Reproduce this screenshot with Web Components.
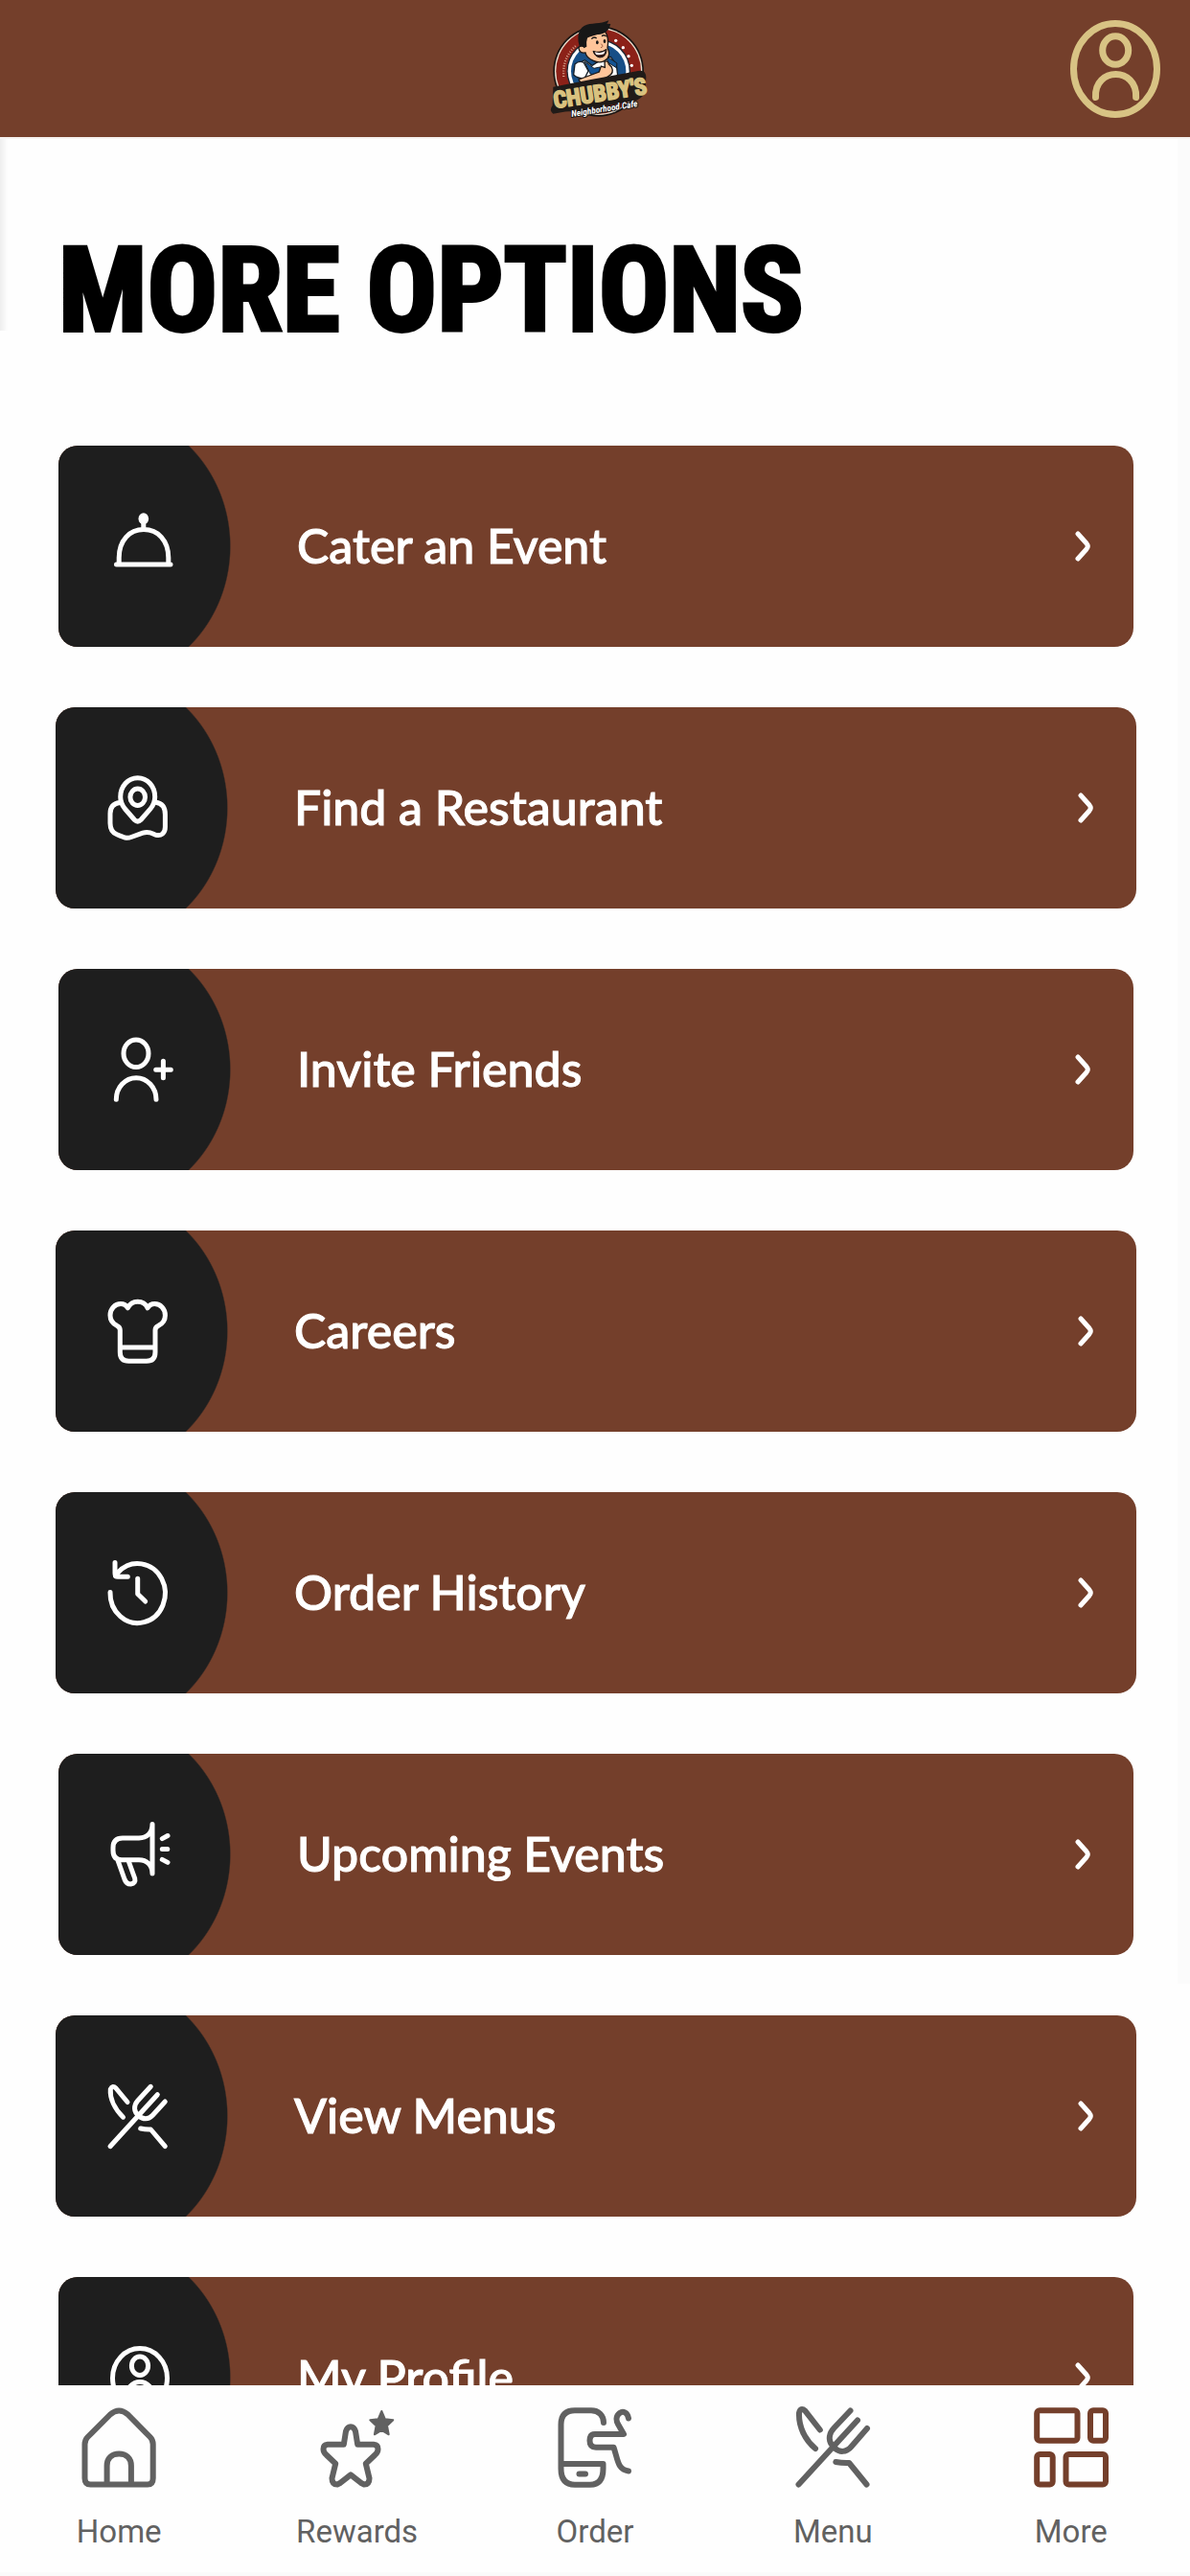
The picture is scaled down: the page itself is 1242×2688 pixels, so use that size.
<!DOCTYPE html>
<html lang="en">
<head>
<meta charset="utf-8">
<meta name="viewport" content="width=device-width, initial-scale=1">
<title>More Options</title>
<style>
  html, body { margin: 0; height: 100%; }
  body {
    --brown: #743f2b; --dark: #1e1e1e; --gold: #d8c384; --grey: #616161;
    --display: "Roboto Condensed", "Open Sans Condensed", "Noto Sans CJK SC", sans-serif;
    background: #fefefe; font-family: Roboto, "Liberation Sans", sans-serif;
  }
</style>
</head>
<body>
<more-page></more-page>
<script>
const define = (name, html, setup) => {
  const tpl = document.createElement('template');
  tpl.innerHTML = html;
  customElements.define(name, class extends HTMLElement {
    connectedCallback() {
      if (this.shadowRoot) return;
      this.attachShadow({ mode: 'open' }).append(tpl.content.cloneNode(true));
      if (setup) setup(this, this.shadowRoot);
    }
  });
};

/* Option icons, drawn on the 180 x 210 badge at the left of a card */
const badges = {
  cloche: `<ellipse cx="88.8" cy="76.3" rx="5.3" ry="6" fill="#fff" stroke="none"/><path d="M88.8 80V87M63.2 123V117C63.2 99 74 87.6 89 87.6S114.8 99 114.8 117V123M60.5 124H117"/>`,
  pin: `<path d="M85.7 73.7C96 73.7 103.7 82.5 103.7 93.5C103.7 99 101.5 103 99 106L89 117.5Q85.7 120.8 82.4 117.5L72.4 106C70 103 67.7 99 67.7 93.5C67.7 82.5 75.5 73.7 85.7 73.7Z"/><ellipse cx="85.7" cy="93.7" rx="7.8" ry="8.7"/><path d="M67 99.5C60 100.5 57 104.5 57 111V121C57 127 59.5 131 64 132.8C71 135.8 74 137.2 79 135.5L91 131.2C98 129 101 132 105 133.3C110 134.6 114.4 131.5 114.4 125V112C114.4 104 111 100 104.5 99.3"/>`,
  invite: `<ellipse cx="81" cy="88.3" rx="13" ry="14.3"/><path d="M60.3 136.3A20.8 22.6 0 0 1 102 136.3M101.7 105.2H117.3M109.4 96.3V113.8"/>`,
  hat: `<path d="M67.3 127V104Q67.3 100.6 64 99.3C59.5 97 57 93 57 88.5C57 81.5 62 76.6 68 76.6C71 76.6 73.8 78.3 75.3 80.8C77.5 76.5 81 74.3 85.7 74.3S94 76.5 96.1 80.8C97.6 78.3 100.4 76.6 103.4 76.6C109.4 76.6 114.4 81.5 114.4 88.5C114.4 93 112 97 107.4 99.3Q104 100.6 104 104V127Q104 136.3 95 136.3H76.3Q67.3 136.3 67.3 127ZM67.3 122H104"/>`,
  history: `<path d="M57 104.5A28.7 31 0 1 0 65.5 83.5L62.6 87.6M62 73.6V84.7Q62 88.3 65 88.3H75.3M85.7 90.3V106.3L93.7 114"/>`,
  megaphone: `<path d="M98 73.6C98 83 92 88 84 88H67Q57 88 57 98V101Q57 110.7 66 110.7H84C92 110.7 98 116 98 125ZM61.7 110.5L69 131Q71 136.2 75.5 136Q81 135 79.7 130L73 111.5M108.3 88.6L114 85.5M108.3 99.4H113.8M108.3 110.4L114 113.4"/>`,
  menus: `<path d="M75 90.5L63 76Q59.5 72.5 57.3 77C56.5 87 62 98 70.5 106.2M57 136.7L106.3 82.7M99.3 74.3L86 88.7C81 94.5 81.5 101 86.8 104.5M114.3 90L101.3 104.3C97 109 91 108.5 87 105M88.7 118Q94 119.3 99.3 119L114.3 136.7"/>`,
  profile: `<ellipse cx="85" cy="105.5" rx="28.5" ry="31"/><ellipse cx="85" cy="92.7" rx="8.6" ry="9.7"/><path d="M71 125A14 15.5 0 0 1 99 125"/>`
};

/* Tab icons on a 78 x 84 box */
const tabs = {
  home: `<path d="M3.5 38.5Q3.5 34 6.5 31L30 7.5Q39.2 -.5 48.5 7.5L71.7 31Q74.7 34 74.7 38.5V74Q74.7 80.5 69 80.5H9.5Q3.5 80.5 3.5 74ZM26.6 80V61C26.6 53 32 48.5 39.2 48.5S51.9 53 51.9 61V80"/>`,
  rewards: `<path d="M24.8 38.7L27 25Q28.5 20.3 32 20.3T37 25L39.2 38.7H56Q60.5 39 60.5 43.5Q60.5 47 57.5 49.5L47.8 58.7L51.5 74Q51.5 80.5 46 80.5L43.5 79.3L32 70.3L20.5 79.3L18 80.5Q12.5 80.5 12.5 74L16.2 58.7L6.5 49.5Q3.5 47 3.5 43.5Q3.5 39 8 38.7Z"/><path fill="currentColor" stroke-width="2" d="M64.3 4L67.8 12.2L76.3 13.2L70 19.2L71.7 28.3L64.3 24L56.9 28.3L58.6 19.2L52.3 13.2L60.8 12.2Z"/>`,
  order: `<path d="M48 16C48 8.5 43 3.2 35 3.2H18Q3.5 3.2 3.5 18V64Q3.5 80.7 18 80.7H34Q47.5 80.7 47.5 64V59H3.5M22.5 69.5H29M74 11.5C73 5 68 3.5 65 5.8C60.5 9 61 14 63 17.5L69 28H39Q33.5 28 33.5 34.8T40 41.7H58.5C63 55 62.5 65 74 66.5"/>`,
  menu: `<path d="M25.8 23.5L10.5 3.8Q5.5 -.5 4 6C3.5 20 10 34 21 43M3.5 80.5L65 13.5M57.5 3.5L40.5 21.5C33.5 29 35 37.5 40.5 41M75 22L58.5 41C53 47.5 46 47 41 42.5M42.3 57Q49 58.3 56.2 58L74.5 80.5"/>`,
  more: `<rect x="3.2" y="3.2" width="42.3" height="31.5" rx="3"/><rect x="59" y="3.2" width="16" height="31.5" rx="3"/><rect x="3.2" y="49" width="16.5" height="31.5" rx="3"/><rect x="33.5" y="49" width="41.5" height="31.5" rx="3"/>`
};

define('chubbys-logo', `
<style>
  :host { display: block; }
  svg { display: block; width: 130px; height: 143px; }
</style>
<svg viewBox="-12 0 390 429" role="img" aria-label="Chubby's Neighborhood Cafe">
  <circle cx="194" cy="223" r="142" fill="#191513"/>
  <circle cx="194" cy="223" r="137" fill="#eadfce"/>
  <circle cx="194" cy="223" r="133" fill="#8c2118"/>
  <circle cx="194" cy="223" r="100" fill="#1b2834"/>
  <circle cx="194" cy="223" r="96" fill="#fff"/>
  <circle cx="194" cy="223" r="86" fill="#174f87"/>
  <path d="M85 240Q80 180 124 143" fill="none" stroke="#dba58d" stroke-width="7" stroke-dasharray="3 5"/>
  <g fill="#fff"><circle cx="248" cy="127" r="5"/><circle cx="271" cy="149" r="5"/><circle cx="288" cy="176" r="5"/><circle cx="298" cy="205" r="5"/></g>
  <path d="M128 200L151 188L174 205L197 190L232 178L250 202L254 236L202 270L144 248L118 228Z" fill="#fff" stroke="#17202a" stroke-width="4"/>
  <path d="M150 192L168 231L210 241L198 210L180 214ZM218 176L252 198L250 212L224 196Z" fill="#145494" stroke="#17202a" stroke-width="3"/>
  <path d="M120 201Q133 188 148 196L162 222L150 246Q128 246 116 234Z" fill="#fff" stroke="#17202a" stroke-width="4"/>
  <path d="M152 118L214 98Q228 117 222 150Q232 169 222 183Q204 202 178 190Q156 181 153 165Q135 168 132 151Q133 142 146 145Z" fill="#ffc59a" stroke="#1b1715" stroke-width="4"/>
  <path d="M136 147C126 127 128 92 149 81C172 70 198 77 226 64Q224 71 220 74L232 75Q226 95 214 102C198 112 171 105 159 119Q155 130 157 146L148 151Q144 140 136 147Z" fill="#171717"/>
  <path d="M172 122Q179 113 188 120M204 113Q212 107 218 114" fill="none" stroke="#171717" stroke-width="4"/>
  <ellipse cx="190" cy="133" rx="4" ry="6" fill="#171717"/><ellipse cx="213" cy="129" rx="4" ry="6" fill="#171717"/>
  <path d="M202 137Q212 147 201 149" fill="none" stroke="#9c6044" stroke-width="3"/>
  <path d="M177 160Q199 168 219 154Q219 179 198 180Q182 177 177 160Z" fill="#31130f" stroke="#171717" stroke-width="3"/>
  <path d="M182 163Q200 169 215 160L211 169Q197 174 186 170Z" fill="#fff"/>
  <path d="M132 249L196 225L202 207L214 211L213 193Q224 188 226 201L235 210Q244 229 225 239Q191 259 164 270Q142 270 132 249Z" fill="#ffc59a" stroke="#1b1715" stroke-width="4"/>
  <path d="M52 272L166 250L318 222Q342 216 343 242L340 292Q326 310 313 314L116 350Q100 346 77 352L52 356Q38 345 50 330Z" fill="#201b18"/>
  <g transform="rotate(-9 196 300)" font-family="'Roboto Condensed','Open Sans Condensed','Noto Sans CJK SC',sans-serif" font-weight="700" text-anchor="middle">
    <text x="200" y="317" font-size="72" fill="#d9c27f" stroke="#d9c27f" stroke-width="5" stroke-linejoin="round">CHUBBY'S</text>
    <text x="206" y="352" font-size="28" font-style="italic" fill="#fff" stroke="#191513" stroke-width="6" paint-order="stroke" stroke-linejoin="round">Neighborhood Cafe</text>
  </g>
</svg>`);

define('app-header', `
<style>
  :host { display: grid; grid-template-columns: 1fr auto 1fr; align-items: center; height: 143px;
          background: var(--brown); border-bottom: 2px solid #f6f2f0; box-sizing: content-box; }
  button { justify-self: end; grid-column: 3; margin: 0 31px 0 0; padding: 0; border: 0; background: none; color: var(--gold); }
  chubbys-logo { grid-column: 2; }
  svg { display: block; width: 94px; height: 102px; fill: none; stroke: currentColor; stroke-width: 7; stroke-linecap: round; }
</style>
<chubbys-logo></chubbys-logo>
<button type="button" aria-label="Profile">
  <svg viewBox="0 0 94 102" aria-hidden="true"><ellipse cx="47" cy="51" rx="43.5" ry="47.5"/><ellipse cx="47.2" cy="31.5" rx="13.5" ry="14.8"/><path d="M26.5 80.5C25 48.5 70 48.5 68.6 80.5"/></svg>
</button>`);

define('option-card', `
<style>
  :host { display: block; }
  :host([inset]) { margin: 0 3px; }
  a { display: flex; align-items: center; height: 210px; border-radius: 20px; overflow: hidden;
      background: var(--brown); color: #fff; text-decoration: none; }
  .badge { flex: none; width: 180px; height: 210px;
      background: radial-gradient(ellipse 132px 142px at 48px 50%, var(--dark) 99%, transparent 100%); }
  svg { display: block; fill: none; stroke: #fff; stroke-width: 5; stroke-linecap: round; stroke-linejoin: round; }
  .badge svg { width: 100%; height: 100%; }
  .label { flex: 1; padding: 0 0 2px 69px; font: 500 50px/60px Lato, "Open Sans", sans-serif; -webkit-text-stroke: 1px #fff; }
  .arrow { width: 18px; height: 34px; margin-right: 44px; }
</style>
<a href="#">
  <span class="badge"></span>
  <span class="label"><slot></slot></span>
  <svg class="arrow" viewBox="0 0 18 34" aria-hidden="true"><path d="M4 4L13 14Q15.5 17 13 20L4 30"/></svg>
</a>`, (el, root) => {
  root.querySelector('.badge').innerHTML = `<svg viewBox="0 0 180 210" aria-hidden="true">${badges[el.getAttribute('icon')]}</svg>`;
});

define('tab-item', `
<style>
  :host { display: block; flex: 1 1 0; color: var(--grey); --icon: var(--grey); }
  :host([active]) { --icon: var(--brown); }
  a { display: flex; flex-direction: column; align-items: center; gap: 26px; color: inherit; text-decoration: none;
      font: 400 33px/40px Roboto, sans-serif; }
  svg { display: block; width: 78px; height: 84px; overflow: visible; color: var(--icon); fill: none; stroke: currentColor;
      stroke-width: 6; stroke-linecap: round; stroke-linejoin: round; }
</style>
<a href="#"><svg viewBox="0 0 78 84" aria-hidden="true"></svg><span><slot></slot></span></a>`, (el, root) => {
  root.querySelector('svg').innerHTML = tabs[el.getAttribute('icon')];
  if (el.hasAttribute('active')) root.querySelector('a').setAttribute('aria-current', 'page');
});

define('tab-bar', `
<style>
  :host { display: block; background: #fefefe; border-bottom: 4px solid #fafafa; }
  nav { display: flex; padding: 23px 0 22px; }
</style>
<nav aria-label="Main"><slot></slot></nav>`);

define('more-page', `
<style>
  :host { display: flex; flex-direction: column; height: 100vh; }
  app-header, tab-bar { flex: none; }
  main { flex: 1; min-height: 0; overflow-y: auto; scrollbar-width: none; padding: 91px 56px 0 58px;
    background: linear-gradient(to right, #eeeeee, #fefefe) 0 0 / 8px 200px no-repeat,
                linear-gradient(#fbfbfb, #fbfbfb) 100% 0 / 13px 1925px no-repeat; }
  h1 { margin: 0 0 93px; padding-left: 3px; font: 700 122px/136px var(--display);
    color: #000; -webkit-text-stroke: 4px #000; }
  .list { display: flex; flex-direction: column; gap: 63px; }
</style>
<app-header></app-header>
<main>
  <h1>MORE OPTIONS</h1>
  <div class="list">
    <option-card icon="cloche" inset>Cater an Event</option-card>
    <option-card icon="pin">Find a Restaurant</option-card>
    <option-card icon="invite" inset>Invite Friends</option-card>
    <option-card icon="hat">Careers</option-card>
    <option-card icon="history">Order History</option-card>
    <option-card icon="megaphone" inset>Upcoming Events</option-card>
    <option-card icon="menus">View Menus</option-card>
    <option-card icon="profile" inset>My Profile</option-card>
  </div>
</main>
<tab-bar>
  <tab-item icon="home">Home</tab-item>
  <tab-item icon="rewards">Rewards</tab-item>
  <tab-item icon="order">Order</tab-item>
  <tab-item icon="menu">Menu</tab-item>
  <tab-item icon="more" active>More</tab-item>
</tab-bar>`);
</script>
</body>
</html>
